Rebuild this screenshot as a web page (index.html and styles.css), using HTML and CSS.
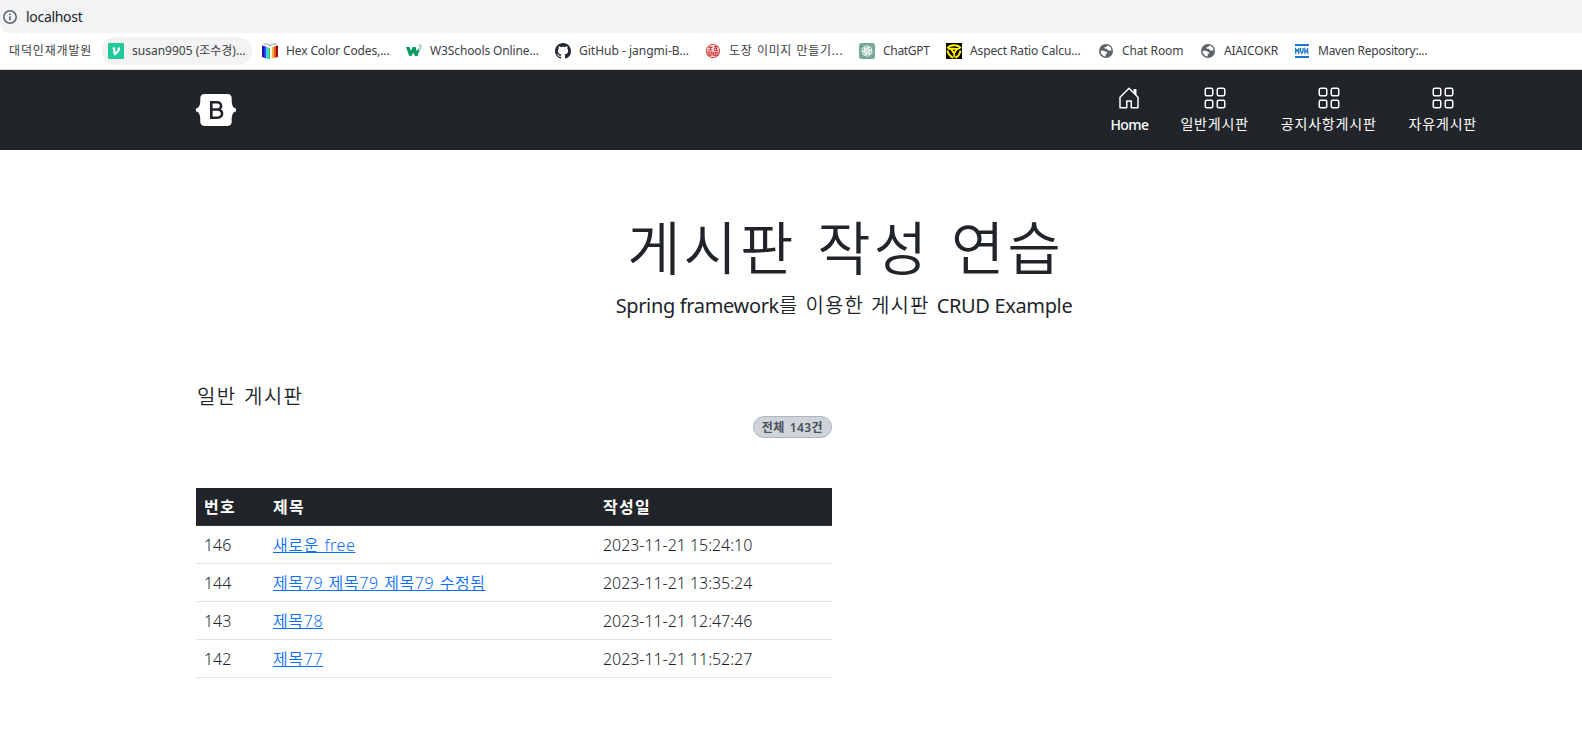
FILE: index.html
```html
<!DOCTYPE html>
<html lang="ko">
<head>
<meta charset="utf-8">
<title>일반 게시판</title>
<link rel="stylesheet" href="styles.css">
</head>
<body>
<svg class="defs" aria-hidden="true">
  <symbol id="grid" viewBox="0 0 16 16">
    <g fill="none" stroke="currentColor">
      <rect x="1.5" y="1.5" width="5" height="5" rx="1"/><rect x="9.5" y="1.5" width="5" height="5" rx="1"/>
      <rect x="1.5" y="9.5" width="5" height="5" rx="1"/><rect x="9.5" y="9.5" width="5" height="5" rx="1"/>
    </g>
  </symbol>
  <symbol id="globe" viewBox="0 0 16 16">
    <circle cx="8" cy="8" r="7" fill="#5f6368"/>
    <path d="M2.6 7.8h3.2c1.4 0 1.7 1.5 3.3 1.5v1.5H7.7v2.7A5.6 5.6 0 0 1 2.6 7.8zM9.2 2.6c-.2 1.5-1 1.4-2.5 1.5v1.7h2.4c.3 1.8 1.2 2 3.7 1.7.5 0 .8.5.7 1A5.6 5.6 0 0 0 9.2 2.6z" fill="#fff"/>
  </symbol>
</svg>

<div class="address">
  <svg class="info" viewBox="0 0 16 16"><circle cx="8" cy="8" r="6.2" fill="none" stroke="#5f6368" stroke-width="1.5"/><path d="M7.2 7.2h1.6v4H7.2zM7.2 4.5h1.6v1.6H7.2z" fill="#5f6368"/></svg>
  <span class="url">localhost</span>
</div>

<nav class="bookmarks">
  <a class="bm bm-folder"><span>대덕인재개발원</span></a>
  <a class="bm bm-velog"><svg viewBox="0 0 16 16"><rect width="16" height="16" rx="1.2" fill="#20c997"/><path d="M4 4.7l2.8-.5 1 5.2c1.4-1.5 2.1-2.8 1.8-3.6-.4-.8.2-1.6 1.2-1.6 1.9 0 1.5 2.3.2 4.2-1 1.5-2.2 2.8-3.6 3.800H6L4.900 5.900z" fill="#fff"/></svg><span>susan9905 (조수경)...</span></a>
  <a class="bm bm-hex"><svg viewBox="0 0 16 16"><path d="M0 2.500l3 .7V15l-3-1z" fill="#2314b4"/><path d="M2.400 3l2 .8V15.500l-2-.7z" fill="#2850ff"/><path d="M4.400 3.800l2 .8V16l-2-.5z" fill="#20d7ef"/><path d="M6.400 4.600L8 5.500V16l-1.600-.2z" fill="#27c94c"/><path d="M8 5.500l1.800-1V15.600L8 16z" fill="#fff"/><path d="M9.800 4.500l1.700-.7V15l-1.700.6z" fill="#ffc21f"/><path d="M11.500 3.800l2-.7v11.300l-2 .7z" fill="#f35a12"/><path d="M13.500 3l2.500-.6V14l-2.500.6z" fill="#a30808"/><path d="M1.500 1.200C5 .6 7 1.300 8 3.200 9 1.300 11 .6 14.500 1.200" fill="none" stroke="#8c8c8c"/></svg><span>Hex Color Codes,...</span></a>
  <a class="bm bm-w3"><svg viewBox="0 0 16 16"><path d="M0 4h3.500L5 8l1.600-4h3l1 4L12 6.500h1.800L11.500 13H9L7.400 9.500 5.400 13H3.200z" fill="#059862"/><path d="M12.600 2.200h2.500l-1.200 1.600c1.600 0 1.600 2.300-.1 2.300-.7 0-1.100-.2-1.400-.7" fill="none" stroke="#4bb58e" stroke-width=".9"/></svg><span>W3Schools Online...</span></a>
  <a class="bm bm-gh"><svg viewBox="0 0 16 16"><path fill="#24292f" d="M8 0C3.58 0 0 3.58 0 8c0 3.54 2.29 6.53 5.47 7.59.4.07.55-.17.55-.38 0-.19-.01-.82-.01-1.49-2.01.37-2.53-.49-2.69-.94-.09-.23-.48-.94-.82-1.13-.28-.15-.68-.52-.01-.53.63-.01 1.08.58 1.23.82.72 1.21 1.87.87 2.33.66.07-.52.28-.87.51-1.07-1.78-.2-3.64-.89-3.64-3.95 0-.87.31-1.59.82-2.15-.08-.2-.36-1.02.08-2.12 0 0 .67-.21 2.2.82.64-.18 1.32-.27 2-.27s1.36.09 2 .27c1.53-1.04 2.2-.82 2.2-.82.44 1.1.16 1.92.08 2.12.51.56.82 1.27.82 2.15 0 3.07-1.87 3.75-3.65 3.95.29.25.54.73.54 1.48 0 1.07-.01 1.93-.01 2.2 0 .21.15.46.55.38A8.01 8.01 0 0 0 16 8c0-4.42-3.58-8-8-8z"/></svg><span>GitHub - jangmi-B...</span></a>
  <a class="bm bm-stamp"><svg viewBox="0 0 16 16"><circle cx="8" cy="8" r="6.700" fill="#fbdcdc" stroke="#d23a3a" stroke-width=".9"/><g fill="none" stroke="#d23a3a" stroke-width="1.100"><path d="M3.500 4.500h4M5.500 3v4M2.800 7h4.500M9 3.500h3L9 6.500M11.500 5v3M9 7.800h4.500M3 9h4v3H3zM5 9v4.500M8.500 9.800h4.500v2.400H8.500zM10.800 9v4.500"/></g></svg><span>도장 이미지 만들기...</span></a>
  <a class="bm bm-gpt"><svg viewBox="0 0 16 16"><rect width="16" height="16" rx="2.500" fill="#75a99b"/><g fill="none" stroke="#fff" stroke-width=".8"><g id="petal"><path d="M5.200 9.600V5.300a2.600 2.600 0 0 1 4.900-1.100M6.800 8.900V6l3.700-2.100"/></g><use href="#petal" transform="rotate(60 8 8)"/><use href="#petal" transform="rotate(120 8 8)"/><use href="#petal" transform="rotate(180 8 8)"/><use href="#petal" transform="rotate(240 8 8)"/><use href="#petal" transform="rotate(300 8 8)"/></g></svg><span>ChatGPT</span></a>
  <a class="bm bm-aspect"><svg viewBox="0 0 16 16"><rect width="16" height="16" fill="#000"/><g fill="none" stroke="#fff200" stroke-width="1.900"><path d="M1.200 5.300C4 1.500 12 1 14.800 5.300M1.500 7.500c.5 3 3 6 5.500 7.300M14.500 7.500c-.5 3-2.500 6-5 7.300M5 5.800l6 .1L8 10.500zM2 5.500l3.500.5M14 5l-3.500 1.500M8.500 14.500L8 10"/></g></svg><span>Aspect Ratio Calcu...</span></a>
  <a class="bm bm-chat"><svg viewBox="0 0 16 16"><use href="#globe"/></svg><span>Chat Room</span></a>
  <a class="bm bm-ai"><svg viewBox="0 0 16 16"><use href="#globe"/></svg><span>AIAICOKR</span></a>
  <a class="bm bm-mvn"><svg viewBox="0 0 16 16"><path d="M1 1h14v2H1zM1 13h14v2H1z" fill="#1976d2"/><path d="M1.700 11V6l1.500 2.200L4.700 6v5M6.500 5v3l1.300 2.200L9.100 8V5M10.900 11V6l2.700 4V5" fill="none" stroke="#1976d2" stroke-width="1.300"/></svg><span>Maven Repository:...</span></a>
</nav>

<header class="topbar">
  <svg class="logo" viewBox="0 0 40 32"><path fill="#fff" d="M8.500 0h23c3 0 4.300 2 4.200 4.700-.1 5 .6 9.300 4.300 9.700v3.200c-3.700.4-4.400 4.700-4.300 9.700.1 2.700-1.200 4.700-4.200 4.700h-23c-3 0-4.300-2-4.200-4.700.1-5-.6-9.300-4.300-9.700v-3.200c3.700-.4 4.400-4.700 4.300-9.700C4.200 2 5.500 0 8.500 0z"/><path fill="none" stroke="#212529" stroke-width="2.600" d="M15.300 8.300h5.600c5.700 0 5.500 7.200 0 7.200h-5.600h6.200c6.200 0 6 8.200 0 8.200h-6.200zV23.700z"/></svg>
  <nav class="menu">
    <a class="item item-home"><svg viewBox="0 0 16 16"><path fill="currentColor" d="M8.354 1.146a.5.5 0 0 0-.708 0l-6 6A.5.5 0 0 0 1.500 7.500v7a.5.5 0 0 0 .5.5h4.500a.5.5 0 0 0 .5-.5v-4h2v4a.5.5 0 0 0 .5.5H14a.5.5 0 0 0 .5-.5v-7a.5.5 0 0 0-.146-.354L13 5.793V2.500a.5.5 0 0 0-.5-.5h-1a.5.5 0 0 0-.5.5v1.293L8.354 1.146zM2.500 14V7.707l5.500-5.500 5.500 5.500V14H10v-4a.5.5 0 0 0-.5-.5h-3a.5.5 0 0 0-.5.5v4H2.500z"/></svg><span>Home</span></a>
    <a class="item"><svg><use href="#grid"/></svg><span>일반게시판</span></a>
    <a class="item"><svg><use href="#grid"/></svg><span>공지사항게시판</span></a>
    <a class="item"><svg><use href="#grid"/></svg><span>자유게시판</span></a>
  </nav>
</header>

<main class="container">
  <section class="hero">
    <h1>게시판 작성 연습</h1>
    <p><span class="latin">Spring framework</span><span class="hangul">를 이용한 게시판 </span><span class="latin">CRUD Example</span></p>
  </section>
  <section class="board">
    <h2>일반 게시판</h2>
    <div class="summary"><span class="badge">전체 143건</span></div>
    <table>
      <thead><tr><th class="no">번호</th><th class="subject">제목</th><th>작성일</th></tr></thead>
      <tbody>
        <tr><td>146</td><td><a href="#">새로운 free</a></td><td class="date">2023-11-21 15:24:10</td></tr>
        <tr><td>144</td><td><a href="#">제목79 제목79 제목79 수정됨</a></td><td class="date">2023-11-21 13:35:24</td></tr>
        <tr><td>143</td><td><a href="#">제목78</a></td><td class="date">2023-11-21 12:47:46</td></tr>
        <tr><td>142</td><td><a href="#">제목77</a></td><td class="date">2023-11-21 11:52:27</td></tr>
      </tbody>
    </table>
  </section>
</main>
</body>
</html>
```
FILE: styles.css
```css
* { box-sizing: border-box; }
body {
  margin: 0;
  height: 753px;
  overflow: hidden;
  background: #fff;
  color: #212529;
  font-family: "Noto Sans", "Noto Sans CJK KR", sans-serif;
  font-size: 16px;
  line-height: 24px;
}
.defs { position: absolute; width: 0; height: 0; }

.address {
  display: flex;
  align-items: center;
  gap: 8px;
  height: 33px;
  padding-left: 2px;
  background: #f1f3f4;
  border-bottom-left-radius: 10px;
  font-size: 14px;
}
.info { width: 16px; height: 16px; }
.url { letter-spacing: -0.3px; }

.bookmarks {
  display: flex;
  align-items: center;
  height: 37px;
  padding-left: 3px;
  border-bottom: 1px solid #d5d7da;
  color: #3c4043;
  font-size: 12px;
  letter-spacing: -0.12px;
}
.bm {
  display: flex;
  flex: none;
  align-items: center;
  gap: 8px;
  height: 28px;
  padding: 0 6px;
  border-radius: 14px;
  white-space: nowrap;
}
.bm svg { flex: none; width: 16px; height: 16px; }
.bm-folder { width: 99px; letter-spacing: 0.85px; }
.bm-velog { width: 150px; margin-right: 4px; background: #f3f3f3; letter-spacing: 0; }
.bm-hex { width: 144px; }
.bm-w3 { width: 149px; }
.bm-gh { width: 150px; letter-spacing: 0; }
.bm-stamp { width: 154px; letter-spacing: 0.65px; word-spacing: 0.8px; }
.bm-gpt { width: 87px; letter-spacing: -0.3px; }
.bm-aspect { width: 152px; }
.bm-chat { width: 102px; }
.bm-ai { width: 94px; }
.bm-mvn { letter-spacing: -0.25px; }

.topbar {
  display: flex;
  justify-content: space-between;
  align-items: center;
  height: 80px;
  padding: 0 89px 0 196px;
  background: #212529;
  color: #fff;
}
.logo { width: 40px; height: 32px; }
.menu { display: flex; }
.item {
  display: flex;
  flex-direction: column;
  align-items: center;
  gap: 3px;
  padding: 0 16px 1px;
  font-size: 14px;
  font-weight: 400;
  line-height: 21px;
  letter-spacing: 0.8px;
  white-space: nowrap;
}
.item-home { gap: 4px; padding-bottom: 0; font-weight: 500; letter-spacing: -0.6px; }
.item svg { width: 24px; height: 24px; }

.container { width: 1320px; margin-left: 184px; padding: 0 12px; }
.hero { padding-top: 64px; text-align: center; }
.hero h1 {
  margin: 0 0 9px;
  padding-left: 3px;
  font-size: 58px;
  font-weight: 350;
  line-height: 67px;
  letter-spacing: 3px;
  word-spacing: 3px;
}
.hero p { margin: 0; font-size: 20px; line-height: 31px; }
.hero .latin { letter-spacing: -0.35px; }
.hero .hangul { font-weight: 350; letter-spacing: 1.1px; word-spacing: 0.8px; }
.board { width: 636px; padding-top: 64px; }
.board h2 {
  margin: 0 0 7px;
  padding-left: 1px;
  font-size: 20px;
  font-weight: 350;
  line-height: 24px;
  letter-spacing: 1.3px;
  word-spacing: 1.2px;
}
.summary { display: flex; justify-content: flex-end; margin-bottom: 50px; }
.badge {
  height: 22px;
  padding: 0 8px;
  border: 1px solid #adb5bd;
  border-radius: 11px;
  background: #ced4da;
  color: #495057;
  font-size: 12px;
  font-weight: 600;
  line-height: 21px;
  letter-spacing: 0.4px;
  word-spacing: 1.5px;
}
table { width: 100%; border-collapse: separate; border-spacing: 0; table-layout: fixed; }
th, td {
  height: 38px;
  padding: 0 8px;
  border-bottom: 1px solid #dee2e6;
  text-align: left;
  white-space: nowrap;
}
th { background: #212529; border-color: #373b3e; color: #fff; font-weight: 700; letter-spacing: 1.3px; }
.no { width: 69px; }
.subject { width: 330px; }
td { font-weight: 350; letter-spacing: -0.05px; }
td a { color: #0d6efd; letter-spacing: 0.6px; word-spacing: 0.7px; }
```
